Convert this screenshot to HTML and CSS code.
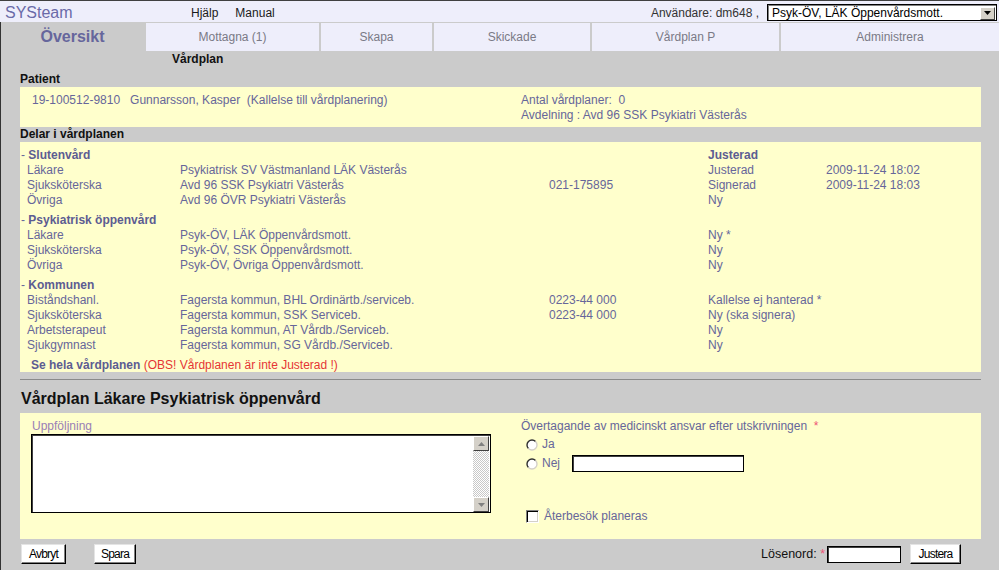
FILE: index.html
```html
<!DOCTYPE html>
<html lang="sv">
<head>
<meta charset="utf-8">
<title>SYSteam – Vårdplan</title>
<link rel="stylesheet" href="styles.css">
</head>
<body>
<header class="topbar">
  <div class="logo">SYSteam</div>
  <nav class="toplinks"><a href="#">Hjälp</a><a href="#">Manual</a></nav>
  <div class="user">
    <span class="user-label">Användare: dm648 ,</span>
    <div class="select">
      <span class="select-text">Psyk-ÖV, LÄK Öppenvårdsmott.</span>
      <span class="select-btn"><svg width="7" height="4" viewBox="0 0 7 4"><polygon points="0,0 7,0 3.5,4" fill="#000"/></svg></span>
    </div>
  </div>
</header>
<main class="main">
  <nav class="tabs">
    <div class="tab tab-active">Översikt</div>
    <div class="tab">Mottagna (1)</div>
    <div class="tab">Skapa</div>
    <div class="tab">Skickade</div>
    <div class="tab">Vårdplan P</div>
    <div class="tab">Administrera</div>
  </nav>
  <div class="subtitle">Vårdplan</div>
  <div class="content">
    <div class="sec-head">Patient</div>
    <div class="box two-col patient">
      <div class="pre">19-100512-9810   Gunnarsson, Kasper  (Kallelse till vårdplanering)</div>
      <div>
        <div class="pre">Antal vårdplaner:  0</div>
        <div>Avdelning : Avd 96 SSK Psykiatri Västerås</div>
      </div>
    </div>

    <div class="sec-head">Delar i vårdplanen</div>
    <div class="box parts">
      <div class="prow head"><span class="grp">- <b>Slutenvård</b></span><b>Justerad</b></div>
      <div class="prow"><span>Läkare</span><span>Psykiatrisk SV Västmanland LÄK Västerås</span><span></span><span>Justerad</span><span>2009-11-24 18:02</span></div>
      <div class="prow"><span>Sjuksköterska</span><span>Avd 96 SSK Psykiatri Västerås</span><span>021-175895</span><span>Signerad</span><span>2009-11-24 18:03</span></div>
      <div class="prow"><span>Övriga</span><span>Avd 96 ÖVR Psykiatri Västerås</span><span></span><span>Ny</span><span></span></div>

      <div class="prow head gap"><span class="grp">- <b>Psykiatrisk öppenvård</b></span></div>
      <div class="prow"><span>Läkare</span><span>Psyk-ÖV, LÄK Öppenvårdsmott.</span><span></span><span>Ny *</span><span></span></div>
      <div class="prow"><span>Sjuksköterska</span><span>Psyk-ÖV, SSK Öppenvårdsmott.</span><span></span><span>Ny</span><span></span></div>
      <div class="prow"><span>Övriga</span><span>Psyk-ÖV, Övriga Öppenvårdsmott.</span><span></span><span>Ny</span><span></span></div>

      <div class="prow head gap"><span class="grp">- <b>Kommunen</b></span></div>
      <div class="prow"><span>Biståndshanl.</span><span>Fagersta kommun, BHL Ordinärtb./serviceb.</span><span>0223-44 000</span><span>Kallelse ej hanterad *</span><span></span></div>
      <div class="prow"><span>Sjuksköterska</span><span>Fagersta kommun, SSK Serviceb.</span><span>0223-44 000</span><span>Ny (ska signera)</span><span></span></div>
      <div class="prow"><span>Arbetsterapeut</span><span>Fagersta kommun, AT Vårdb./Serviceb.</span><span></span><span>Ny</span><span></span></div>
      <div class="prow"><span>Sjukgymnast</span><span>Fagersta kommun, SG Vårdb./Serviceb.</span><span></span><span>Ny</span><span></span></div>

      <div class="see-all"><b>Se hela vårdplanen</b> <span class="warn">(OBS! Vårdplanen är inte Justerad !)</span></div>
    </div>

    <hr class="sep">

    <h2 class="title">Vårdplan Läkare Psykiatrisk öppenvård</h2>
    <div class="box form-box">
      <div class="form-left">
        <div class="lbl-soft">Uppföljning</div>
        <div class="textbox">
          <textarea class="ta" aria-label="Uppföljning"></textarea>
          <div class="sbar">
            <span class="sbtn"><svg width="7" height="4" viewBox="0 0 7 4"><polygon points="0,4 7,4 3.5,0" fill="#808080"/></svg></span>
            <span class="track"></span>
            <span class="sbtn"><svg width="7" height="4" viewBox="0 0 7 4"><polygon points="0,0 7,0 3.5,4" fill="#808080"/></svg></span>
          </div>
        </div>
      </div>
      <div class="form-right">
        <div class="q">Övertagande av medicinskt ansvar efter utskrivningen&nbsp; <span class="req">*</span></div>
        <div class="radio-row r-ja">
          <svg class="radio" width="12" height="12" viewBox="0 0 12 12"><circle cx="6" cy="6" r="5" fill="#fff"/><path d="M9.54 2.46 A5 5 0 0 0 2.46 9.54" fill="none" stroke="#303030" stroke-width="1.4"/><path d="M2.46 9.54 A5 5 0 0 0 9.54 2.46" fill="none" stroke="#d4d0c8" stroke-width="1.4"/></svg>
          <span>Ja</span>
        </div>
        <div class="radio-row r-nej">
          <svg class="radio" width="12" height="12" viewBox="0 0 12 12"><circle cx="6" cy="6" r="5" fill="#fff"/><path d="M9.54 2.46 A5 5 0 0 0 2.46 9.54" fill="none" stroke="#303030" stroke-width="1.4"/><path d="M2.46 9.54 A5 5 0 0 0 9.54 2.46" fill="none" stroke="#d4d0c8" stroke-width="1.4"/></svg>
          <span class="nej">Nej</span>
          <input class="field nej-field" type="text" aria-label="Nej">
        </div>
        <div class="check-row">
          <span class="checkbox"></span>
          <span>Återbesök planeras</span>
        </div>
      </div>
    </div>

    <div class="actions">
      <div class="actions-left">
        <button class="btn btn-avbryt" type="button">Avbryt</button>
        <button class="btn btn-spara" type="button">Spara</button>
      </div>
      <div class="actions-right">
        <span class="pw-label">Lösenord: <span class="req">*</span></span>
        <input class="field pw-field" type="password" aria-label="Lösenord">
        <button class="btn btn-justera" type="button">Justera</button>
      </div>
    </div>
  </div>
</main>
</body>
</html>
```
FILE: styles.css
```css
* { box-sizing: border-box; margin: 0; padding: 0; }

body {
  width: 999px;
  height: 570px;
  overflow: hidden;
  background: #cbcbcb;
  font: 12px/15px "Liberation Sans", Arial, sans-serif;
  color: #111;
  border-top: 1px solid #404040;
}

/* ---------- top bar ---------- */
.topbar {
  display: flex;
  height: 21px;
  background: #eeeefb;
}
.logo {
  width: 191px;
  padding: 1px 0 0 5px;
  font-size: 16px;
  line-height: 21px;
  color: #6a6aa8;
}
.toplinks {
  display: flex;
  gap: 17px;
  padding-top: 2px;
  line-height: 21px;
}
.toplinks a { color: #1a1a1a; text-decoration: none; }
.user {
  margin-left: auto;
  display: flex;
  align-items: flex-start;
  padding: 3px 2px 0 0;
}
.user-label {
  color: #333;
  line-height: 18px;
  margin-right: 8px;
}
.select {
  width: 230px;
  height: 17px;
  background: #fff;
  border: 1px solid #000;
  box-shadow: inset 1px 1px 0 #808080;
  display: flex;
  align-items: center;
  padding: 1px 1px 0 4px;
}
.select-text { flex: 1; color: #000; line-height: 14px; }
.select-btn {
  width: 15px;
  height: 13px;
  background: #d4d0c8;
  border: 1px solid;
  border-color: #fff #404040 #404040 #fff;
  display: flex;
  align-items: center;
  justify-content: center;
}

/* ---------- main ---------- */
.main {
  padding-top: 1px;
  border-left: 1px solid #333;
  height: 548px;
}
.tabs {
  display: grid;
  grid-template-columns: 143px 173px 111px 156px 187px 1fr;
  column-gap: 2px;
  height: 28px;
}
.tab {
  background: #eeeefb;
  color: #7a7a86;
  text-align: center;
  line-height: 28px;
}
.tab-active {
  background: transparent;
  color: #66669c;
  font-size: 16px;
  font-weight: bold;
}
.subtitle {
  padding-left: 171px;
  margin-top: 1px;
  font-weight: bold;
  color: #111;
}

.content { padding: 0 18px 0 19px; }

.sec-head {
  font-weight: bold;
  color: #111;
  line-height: 15px;
}
.content > .sec-head:first-child { margin-top: 5px; }

.box {
  background: #ffffcc;
  color: #66669a;
}
.pre { white-space: pre; }
.two-col {
  display: grid;
  grid-template-columns: 489px 1fr;
  height: 40px;
  padding: 6px 0 0 12px;
}

/* ---------- parts table ---------- */
.parts {
  height: 230px;
  padding: 6px 0 0 7px;
}
.prow {
  display: grid;
  grid-template-columns: 153px 369px 159px 118px 1fr;
  line-height: 15px;
  white-space: nowrap;
}
.prow b { color: #5c5c92; }
.prow .grp { grid-column: 1 / 4; margin-left: -6px; }
.prow.gap { margin-top: 5px; }
.see-all {
  margin: 5px 0 0 4px;
  line-height: 15px;
}
.see-all b { color: #5c5c92; }
.warn { color: #e53535; }

.sep {
  border: 0;
  border-top: 1px solid #8a8a8a;
  margin-top: 7px;
}

.title {
  margin-top: 9px;
  padding-left: 1px;
  font-size: 16px;
  line-height: 20px;
  font-weight: bold;
  color: #111;
}

/* ---------- form ---------- */
.form-box {
  margin-top: 4px;
  height: 126px;
  display: grid;
  grid-template-columns: 489px 1fr;
  padding: 6px 0 0 12px;
}
.lbl-soft { color: #9a80b6; line-height: 15px; }
.textbox {
  margin: 0 0 0 -1px;
  width: 460px;
  height: 79px;
  display: flex;
  background: #fff;
  border: 1px solid #000;
  box-shadow: inset 1px 1px 0 #404040;
  padding: 1px 1px 0 1px;
}
.ta {
  flex: 1;
  border: 0;
  resize: none;
  outline: none;
  background: #fff;
  font: 12px "Liberation Sans", Arial, sans-serif;
}
.sbar {
  width: 16px;
  display: flex;
  flex-direction: column;
}
.sbtn {
  height: 15px;
  background: #d4d0c8;
  border: 1px solid;
  border-color: #fff #404040 #404040 #fff;
  display: flex;
  align-items: center;
  justify-content: center;
}
.track {
  flex: 1;
  background: repeating-conic-gradient(#ffffff 0 25%, #c8c8c8 0 50%) 0 0 / 2px 2px;
}

.form-right { color: #66669a; }
.q { line-height: 15px; }
.req { color: #ee5577; }
.radio-row {
  display: flex;
  align-items: center;
  padding-left: 5px;
}
.radio { margin-right: 4px; flex: none; }
.r-ja { margin-top: 3px; height: 15px; }
.r-nej { margin-top: 3px; height: 17px; }
.nej { width: 30px; }
.field {
  height: 17px;
  background: #fff;
  border: 1px solid #000;
  box-shadow: inset 1px 1px 0 #404040;
  outline: none;
  font: 12px "Liberation Sans", Arial, sans-serif;
}
.nej-field { width: 172px; }
.check-row {
  margin-top: 37px;
  height: 15px;
  display: flex;
  align-items: center;
  padding-left: 5px;
}
.checkbox {
  width: 13px;
  height: 13px;
  background: #fff;
  border: 1px solid;
  border-color: #808080 #fff #fff #808080;
  box-shadow: inset 1px 1px 0 #000, inset -1px -1px 0 #d4d0c8;
  margin-right: 5px;
}

/* ---------- actions ---------- */
.actions {
  margin-top: 5px;
  display: flex;
  justify-content: space-between;
  align-items: center;
  padding: 0 20px 0 1px;
}
.actions-left, .actions-right { display: flex; align-items: center; }
.btn {
  height: 20px;
  background: #fff;
  border: 1px solid;
  border-color: #e4e4e4 #000 #000 #e4e4e4;
  box-shadow: inset -1px -1px 0 #808080;
  font: 12px "Liberation Sans", Arial, sans-serif;
  letter-spacing: -0.8px;
  color: #000;
  padding: 0;
}
.btn-avbryt { width: 45px; }
.btn-spara { width: 42px; margin-left: 28px; }
.btn-justera { width: 51px; margin-left: 9px; }
.pw-label { color: #111; font-size: 12.5px; }
.pw-field { width: 74px; margin-left: 2px; }
```
